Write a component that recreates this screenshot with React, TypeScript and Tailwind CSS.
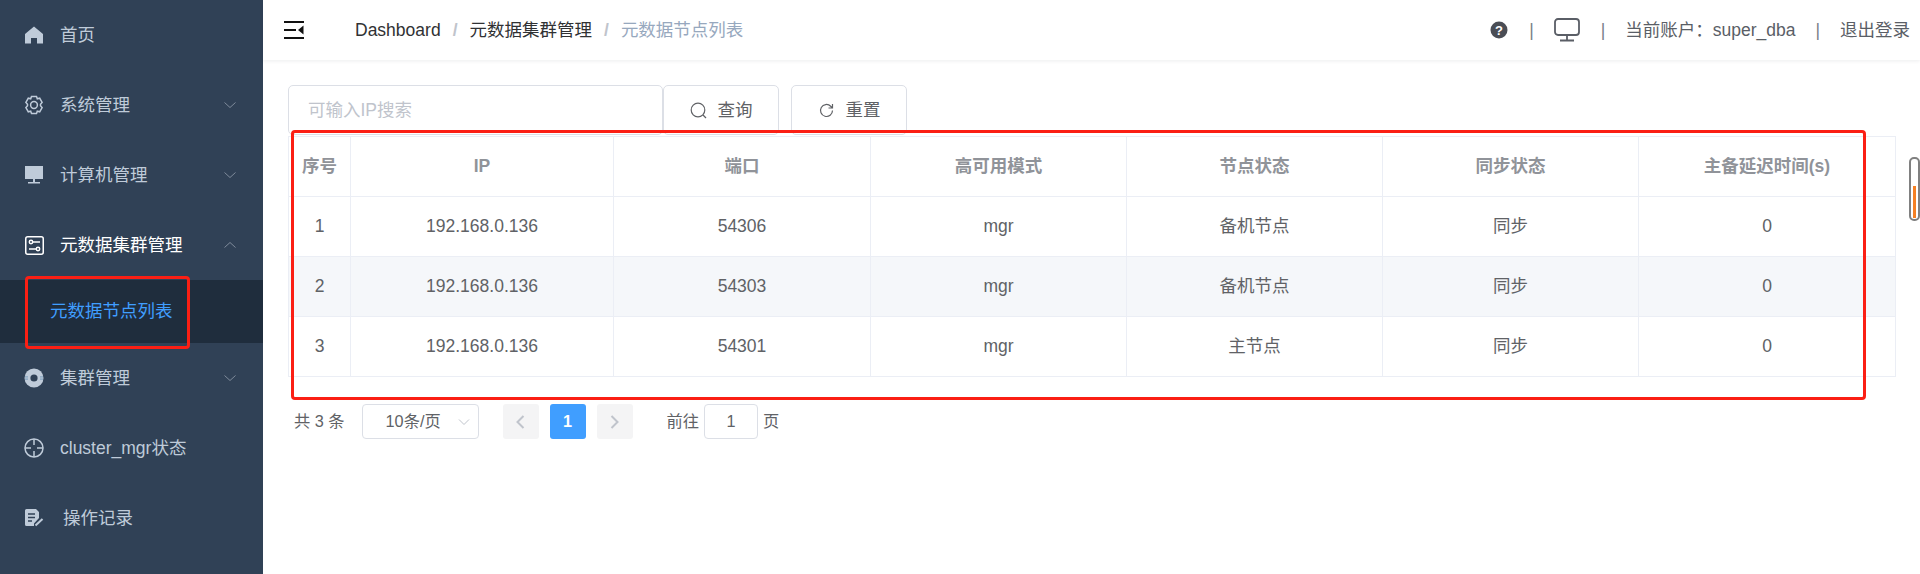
import React from "react";

const font = { fontFamily: '"Liberation Sans","Noto Sans CJK SC",sans-serif' };

function Chevron({ up = false }: { up?: boolean }) {
  return (
    <svg width="12" height="8" viewBox="0 0 12 8" fill="none" stroke="#7f8b9b" strokeWidth="1" className="ml-auto mr-[27px]">
      <path d={up ? "M0.5 6.5 L6 1.5 L11.5 6.5" : "M0.5 1.5 L6 6.5 L11.5 1.5"} />
    </svg>
  );
}

const ic = "#bfcbd9";

const HomeIcon = () => (
  <svg width="18" height="18" viewBox="0 0 18 18"><path d="M9 .5 L18 8 V17.5 H12 V12 H6 V17.5 H0 V8 Z" fill={ic} /></svg>
);
const GearIcon = () => (
  <svg width="20" height="20" viewBox="0 0 20 20" fill="none" stroke={ic} strokeWidth="1.5">
    <path d="M7.5 1.5h5l.8 2.3 2.4-.6 2.4 4.2-1.6 1.9v1.4l1.6 1.9-2.4 4.2-2.4-.6-.8 2.3h-5l-.8-2.3-2.4.6-2.4-4.2 1.6-1.9V9.3L1.9 7.4l2.4-4.2 2.4.6z" />
    <circle cx="10" cy="10" r="3.4" />
  </svg>
);
const MonitorFilled = () => (
  <svg width="18" height="18" viewBox="0 0 18 18" fill={ic}><rect x="0" y="0" width="18" height="13" /><rect x="8" y="13" width="2" height="3" /><rect x="3" y="16" width="12" height="1.5" /></svg>
);
const SlidersIcon = () => (
  <svg width="19" height="19" viewBox="0 0 19 19" fill="none" stroke="#fff" strokeWidth="1.5">
    <rect x=".75" y=".75" width="17.5" height="17.5" rx="2" />
    <circle cx="6" cy="6" r="1.7" /><path d="M8 6h7" />
    <circle cx="13" cy="13" r="1.7" /><path d="M4 13h7" />
  </svg>
);
const RingIcon = () => (
  <svg width="20" height="20" viewBox="0 0 20 20"><circle cx="10" cy="10" r="9.5" fill={ic} /><circle cx="10" cy="10" r="3.6" fill="#304156" /><path d="M1 8.9 H4 M16 8.9 H19 M1 11.1H4M16 11.1H19" stroke="#5a8ab0" strokeWidth="0.7" /></svg>
);
const CrossIcon = () => (
  <svg width="20" height="20" viewBox="0 0 20 20" fill="none" stroke={ic} strokeWidth="1.5">
    <circle cx="10" cy="10" r="9" /><path d="M10 1v6M10 13v6M1 10h6M13 10h6" />
  </svg>
);
const LogIcon = () => (
  <svg width="19" height="18" viewBox="0 0 19 18">
    <path d="M1.5 0H11l3 3v6l-5 5.500V17H1.500A1.500 1.500 0 0 1 0 15.500V1.500A1.500 1.500 0 0 1 1.500 0Z" fill={ic} />
    <path d="M3 5h7M3 8.500h7M3 12h4" stroke="#304156" strokeWidth="1.500" />
    <path d="M10.500 16.500L17.500 10" stroke={ic} strokeWidth="2" />
  </svg>
);

function MenuItem({ icon, label, chevron, active, labelClass = "" }: { icon: React.ReactNode; label: string; chevron?: "up" | "down"; active?: boolean; labelClass?: string }) {
  return (
    <div className={`flex h-[70px] items-center pl-[24px] text-[17.5px] ${active ? "text-white" : "text-[#bfcbd9]"}`}>
      <span className="flex w-[20px] justify-center">{icon}</span>
      <span className={`ml-[16px] ${labelClass}`}>{label}</span>
      {chevron && <Chevron up={chevron === "up"} />}
    </div>
  );
}

const columns = [
  { w: "w-[62px]", t: "序号" },
  { w: "w-[263px]", t: "IP" },
  { w: "w-[257px]", t: "端口" },
  { w: "w-[256px]", t: "高可用模式" },
  { w: "w-[256px]", t: "节点状态" },
  { w: "w-[256px]", t: "同步状态" },
  { w: "w-[257px]", t: "主备延迟时间(s)" },
];

const rows = [
  ["1", "192.168.0.136", "54306", "mgr", "备机节点", "同步", "0"],
  ["2", "192.168.0.136", "54303", "mgr", "备机节点", "同步", "0"],
  ["3", "192.168.0.136", "54301", "mgr", "主节点", "同步", "0"],
];

export default function App() {
  return (
    <div className="relative flex h-[574px] w-[1920px] overflow-hidden bg-white" style={font}>
      <aside className="flex w-[263px] shrink-0 flex-col bg-[#304156] pt-[-2px]">
        <MenuItem icon={<HomeIcon />} label="首页" />
        <MenuItem icon={<GearIcon />} label="系统管理" chevron="down" />
        <MenuItem icon={<MonitorFilled />} label="计算机管理" chevron="down" />
        <MenuItem icon={<SlidersIcon />} label="元数据集群管理" chevron="up" active />
        <div className="flex h-[63px] items-center bg-[#1f2d3d] pl-[50px] text-[17.5px] text-[#409eff]">元数据节点列表</div>
        <MenuItem icon={<RingIcon />} label="集群管理" chevron="down" />
        <MenuItem icon={<CrossIcon />} label="cluster_mgr状态" />
        <MenuItem icon={<LogIcon />} label="操作记录" labelClass="ml-[19px]" />
      </aside>

      <main className="flex min-w-0 flex-1 flex-col">
        <header className="flex h-[60px] items-center text-[17.5px] shadow-[0_1px_4px_rgba(0,21,41,0.08)]">
          <svg width="20" height="18" viewBox="0 0 20 18" className="ml-[21px]" fill="#111">
            <rect x="0" y="0" width="20" height="2" /><rect x="0" y="8" width="12" height="2" /><rect x="0" y="16" width="20" height="2" />
            <path d="M19.500 4.500V13.500L14 9Z" />
          </svg>
          <span className="ml-[51px] text-[#303133]">Dashboard</span>
          <span className="mx-[12px] font-bold text-[#c0c4cc]">/</span>
          <span className="text-[#303133]">元数据集群管理</span>
          <span className="mx-[12px] font-bold text-[#c0c4cc]">/</span>
          <span className="text-[#97a8be]">元数据节点列表</span>

          <div className="ml-auto flex items-center text-[#5a5e66]">
            <svg width="18" height="18" viewBox="0 0 18 18">
              <circle cx="9" cy="9" r="8.500" fill="#4a4d55" />
              <text x="9" y="13.500" textAnchor="middle" fontSize="13" fontWeight="700" fill="#fff" fontFamily="Liberation Sans">?</text>
            </svg>
            <span className="ml-[21px] text-[#7a7f88]">|</span>
            <svg width="26" height="24" viewBox="0 0 26 24" fill="none" stroke="#5a5e66" strokeWidth="1.800" className="ml-[20px]">
              <rect x="1" y="1" width="24" height="16" rx="3" /><path d="M13 17v5M6 22.500h14" />
            </svg>
            <span className="ml-[21px] text-[#7a7f88]">|</span>
            <span className="ml-[20px]">当前账户：super_dba</span>
            <span className="ml-[20px] text-[#7a7f88]">|</span>
            <span className="ml-[20px] mr-[10px]">退出登录</span>
          </div>
        </header>

        <div className="flex flex-1 flex-col px-[25px] pt-[25px]">
          <div className="flex h-[51px] items-start text-[17.5px]">
            <div className="flex h-[50px] w-[375px] items-center rounded-[5px] border border-[#dcdfe6] pl-[19px] text-[#c0c4cc]">可输入IP搜索</div>
            <button className="flex h-[50px] w-[116px] items-center justify-center gap-[11px] rounded-[5px] border border-[#dcdfe6] text-[#606266]">
              <svg width="17" height="17" viewBox="0 0 17 17" fill="none" stroke="#606266" strokeWidth="1.200"><circle cx="8" cy="8" r="6.800" /><path d="M13 13l3 3" /></svg>
              查询
            </button>
            <button className="ml-[12px] flex h-[50px] w-[116px] items-center justify-center gap-[11px] rounded-[5px] border border-[#dcdfe6] text-[#606266]">
              <svg width="17" height="17" viewBox="0 0 17 17" fill="none" stroke="#606266" strokeWidth="1.200"><path d="M14.500 8.500a6 6 0 1 1-1.800-4.300L14.500 6M14.500 2v4h-4" /></svg>
              重置
            </button>
          </div>

          <table className="w-[1607px] table-fixed border-collapse text-center text-[17.5px] text-[#606266]">
            <colgroup>
              {columns.map((c) => (
                <col key={c.t} className={c.w} />
              ))}
            </colgroup>
            <thead>
              <tr className="h-[60px]">
                {columns.map((c) => (
                  <th key={c.t} className="border border-[#ebeef5] font-bold text-[#909399]">{c.t}</th>
                ))}
              </tr>
            </thead>
            <tbody>
              {rows.map((r, i) => (
                <tr key={i} className={`h-[60px] ${i === 1 ? "bg-[#f5f7fa]" : ""}`}>
                  {r.map((v, j) => (
                    <td key={j} className="border border-[#ebeef5]">{v}</td>
                  ))}
                </tr>
              ))}
            </tbody>
          </table>

          <div className="mt-[27px] flex h-[35px] items-center pl-[6px] text-[16.250px] text-[#606266]">
            <span>共 3 条</span>
            <div className="ml-[17px] flex h-[35px] w-[117px] items-center rounded-[4px] border border-[#dcdfe6] pl-[23px]">
              10条/页
              <svg width="12" height="8" viewBox="0 0 12 8" fill="none" stroke="#c0c4cc" className="ml-auto mr-[8px]"><path d="M1 1.500L6 6.500L11 1.500" /></svg>
            </div>
            <div className="ml-[24px] flex h-[35px] w-[36px] items-center justify-center rounded-[3px] bg-[#f4f4f5]">
              <svg width="9" height="14" viewBox="0 0 9 14" fill="none" stroke="#c0c4cc" strokeWidth="2"><path d="M7.500 1L1.500 7L7.500 13" /></svg>
            </div>
            <div className="ml-[11px] flex h-[35px] w-[36px] items-center justify-center rounded-[3px] bg-[#409eff] font-bold text-white">1</div>
            <div className="ml-[11px] flex h-[35px] w-[36px] items-center justify-center rounded-[3px] bg-[#f4f4f5]">
              <svg width="9" height="14" viewBox="0 0 9 14" fill="none" stroke="#c0c4cc" strokeWidth="2"><path d="M1.500 1L7.500 7L1.500 13" /></svg>
            </div>
            <span className="ml-[34px]">前往</span>
            <div className="ml-[5px] flex h-[35px] w-[54px] items-center justify-center rounded-[4px] border border-[#dcdfe6]">1</div>
            <span className="ml-[5px]">页</span>
          </div>
        </div>
      </main>

      {/* annotations drawn over the page */}
      <div className="pointer-events-none absolute left-[25px] top-[276px] h-[73px] w-[165px] rounded-[4px] border-[3px] border-[#fb1f14]" />
      <div className="pointer-events-none absolute left-[291px] top-[130px] h-[270px] w-[1575px] rounded-[4px] border-[3px] border-[#fb1f14]" />
      <div className="absolute left-[1909px] top-[157px] h-[64px] w-[11px] rounded-[5px] border-[2px] border-[#808080] bg-white">
        <div className="absolute bottom-[1px] left-[2px] h-[32px] w-[3px] bg-[#f58024]" />
      </div>
    </div>
  );
}
